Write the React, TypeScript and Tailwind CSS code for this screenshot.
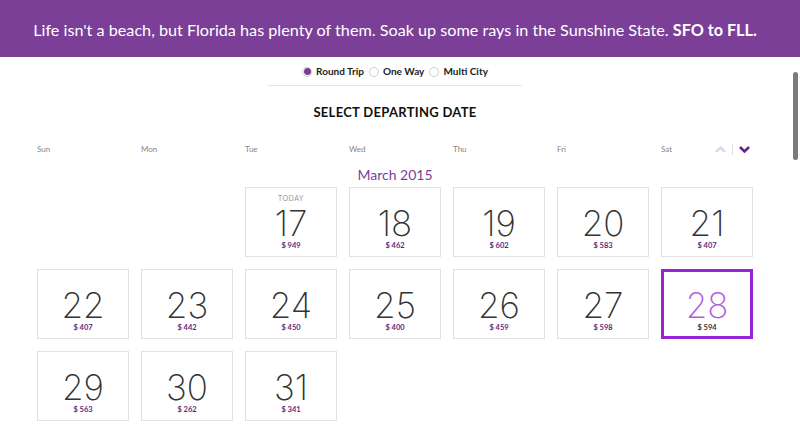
import React from "react";

type Day = { d: number; p: number; today?: boolean; sel?: boolean };

const rows: (Day | null)[][] = [
  [null, null, { d: 17, p: 949, today: true }, { d: 18, p: 462 }, { d: 19, p: 602 }, { d: 20, p: 583 }, { d: 21, p: 407 }],
  [{ d: 22, p: 407 }, { d: 23, p: 442 }, { d: 24, p: 450 }, { d: 25, p: 400 }, { d: 26, p: 459 }, { d: 27, p: 598 }, { d: 28, p: 594, sel: true }],
  [{ d: 29, p: 563 }, { d: 30, p: 262 }, { d: 31, p: 341 }, null, null, null, null],
];

const days = ["Sun", "Mon", "Tue", "Wed", "Thu", "Fri", "Sat"];

function Radio({ label, checked }: { label: string; checked?: boolean }) {
  return (
    <div className="flex items-center gap-[4px]">
      <span className="w-[10px] h-[10px] rounded-full border border-[#cfcfcf] bg-white flex items-center justify-center">
        {checked && <span className="w-[7px] h-[7px] rounded-full bg-[#7b3f98]" />}
      </span>
      <span className="text-[10px] font-bold text-[#222]">{label}</span>
    </div>
  );
}

function Cell({ day }: { day: Day }) {
  return (
    <div
      className={
        "w-[92px] h-[70px] bg-white flex flex-col items-center " +
        (day.sel ? "border-[3px] border-[#9a22d8]" : "border border-[#e2e2e2]")
      }
    >
      {day.today ? (
        <div className="mt-[7px] h-[8px] leading-none text-[7px] text-[#9a9a9a] tracking-[0.5px]">TODAY</div>
      ) : null}
      <div
        className={
          "leading-[30px] h-[30px] text-[35px] " +
          (day.sel ? "mt-[18px] text-[#b45ce0]" : day.today ? "mt-[5px] text-[#333]" : "mt-[20px] text-[#333]")
        }
        style={{ fontFamily: "Inter, Lato, sans-serif", fontWeight: 200 }}
      >
        {day.d}
      </div>
      <div className={"text-[7.5px] leading-none font-bold mt-[4px] " + (day.sel ? "text-[#333]" : "text-[#5b2b7e]")}>$ {day.p}</div>
    </div>
  );
}

export default function App() {
  return (
    <div className="w-[800px] h-[430px] bg-white overflow-hidden relative" style={{ fontFamily: "Lato, 'Open Sans', sans-serif" }}>
      <div className="h-[57px] bg-[#7b3f98] flex items-center">
        <div className="w-[790px] text-center text-white text-[16.2px] pt-[3px]">
          Life isn't a beach, but Florida has plenty of them. Soak up some rays in the Sunshine State. <b>SFO to FLL.</b>
        </div>
      </div>
      <div className="w-[790px] flex flex-col items-center">
        <div className="w-[254px] h-[29px] border-b border-[#e4e4e4] flex items-center justify-center gap-[5px] pt-[1px]">
          <Radio label="Round Trip" checked />
          <Radio label="One Way" />
          <Radio label="Multi City" />
        </div>
        <div className="mt-[20px] text-[13px] font-bold text-[#111] tracking-[0.3px] leading-none">SELECT DEPARTING DATE</div>
        <div className="w-[716px] mt-[24px] grid grid-cols-7 gap-x-[12px] h-[12px] items-center relative">
          {days.map((d) => (
            <div key={d} className="text-[8px] text-[#858585]">{d}</div>
          ))}
          <div className="absolute right-[3px] top-0 h-[12px] flex items-center gap-[6px]">
            <svg width="11" height="7" viewBox="0 0 11 7">
              <path d="M1 6 L5.5 1.5 L10 6" stroke="#e4cff0" strokeWidth="2.4" fill="none" />
            </svg>
            <span className="w-px h-[11px] bg-[#e0e0e0]" />
            <svg width="11" height="7" viewBox="0 0 11 7">
              <path d="M1 1 L5.5 5.5 L10 1" stroke="#5e2a80" strokeWidth="2.6" fill="none" />
            </svg>
          </div>
        </div>
        <div className="mt-[13px] text-[14px] text-[#7b3f98] leading-none">March 2015</div>
        <div className="w-[716px] mt-[5px] grid grid-cols-7 gap-x-[12px] gap-y-[12px]">
          {rows.flat().map((c, i) => (c ? <Cell key={i} day={c} /> : <div key={i} className="w-[92px] h-[70px]" />))}
        </div>
      </div>
      <div className="absolute left-[793px] top-[72px] w-[5px] h-[88px] rounded-full bg-[#7a7a7a]" />
    </div>
  );
}
